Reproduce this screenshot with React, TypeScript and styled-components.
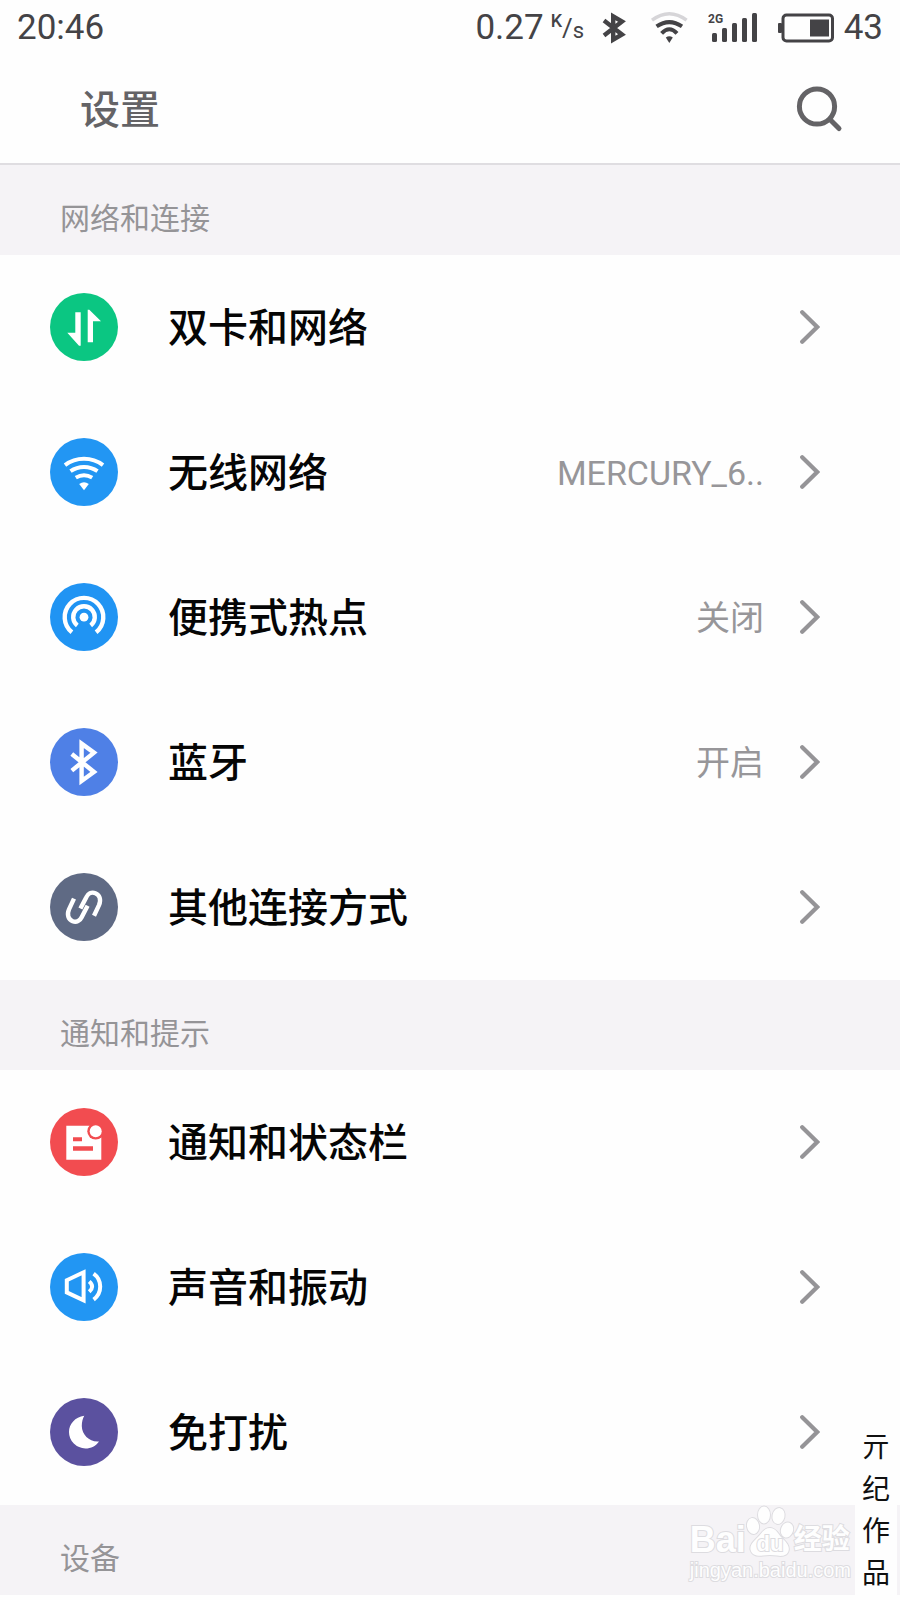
import React from "react";
import styled, { createGlobalStyle } from "styled-components";

const GlobalStyle = createGlobalStyle`
  * { box-sizing: border-box; }
  body {
    margin: 0;
    background: #fefefe;
    font-family: Roboto, "Noto Sans CJK SC", sans-serif;
  }
`;

const Page = styled.div`
  position: relative;
  padding-bottom: 5px;
  overflow: hidden;
`;

const StatusBar = styled.div`
  display: flex;
  align-items: center;
  justify-content: space-between;
  height: 55px;
  padding: 0 17px;
  color: #444346;
  font-size: 35px;
  line-height: 42px;
`;

const StatusGroup = styled.div<{ $gap: number }>`
  display: flex;
  align-items: center;
  gap: ${(p) => p.$gap}px;
`;

const Unit = styled.span`
  display: flex;
  align-items: flex-end;
  width: 31px;
  height: 32px;
  font-size: 22px;
  line-height: 26px;
`;

const UnitTop = styled.span`
  align-self: flex-start;
  font-size: 18px;
  font-weight: 500;
  line-height: 18px;
`;

const UnitSlash = styled.span`
  font-size: 26px;
  line-height: 32px;
`;

const Header = styled.header`
  display: flex;
  align-items: center;
  justify-content: space-between;
  height: 110px;
  padding: 0 56px 0 80px;
  border-bottom: 2px solid #dfdde1;
`;

const Title = styled.h1`
  margin: 0;
  padding-top: 4px;
  color: #646366;
  font-size: 40px;
  font-weight: 500;
  line-height: 60px;
`;

const SearchButton = styled.button`
  display: flex;
  padding: 0;
  border: 0;
  background: none;
  color: #646366;
`;

const SectionTitle = styled.h2`
  height: 90px;
  margin: 0;
  padding: 31px 60px 0;
  background: #f5f3f6;
  color: #959497;
  font-size: 30px;
  font-weight: 400;
  line-height: 45px;
`;

const List = styled.ul`
  margin: 0;
  padding: 0;
  list-style: none;
`;

const Row = styled.button`
  display: flex;
  align-items: center;
  width: 100%;
  height: 145px;
  padding: 0 80px 2px 50px;
  border: 0;
  background: none;
  color: #050505;
  font-family: inherit;
  text-align: left;
`;

const Label = styled.span`
  flex: 1;
  margin-left: 50px;
  padding-top: 4px;
  font-size: 40px;
  font-weight: 500;
  line-height: 60px;
`;

const Value = styled.span`
  margin-right: 36px;
  padding-top: 2px;
  color: #979699;
  font-size: 34px;
  line-height: 50px;
`;

const Signature = styled.div`
  position: absolute;
  right: 3px;
  bottom: 0;
  width: 42px;
  height: 173px;
  background: #fefefe;
  color: #101010;
  font-size: 28px;
  font-weight: 400;
  line-height: 42px;
  text-align: center;
`;

const Watermark = styled.div`
  position: absolute;
  right: 49px;
  bottom: 17px;
  color: #fefefe;
  -webkit-text-stroke: 2px #dddce0;
  paint-order: stroke fill;
  font-family: "Liberation Sans", "Noto Sans CJK SC", sans-serif;
  font-size: 20px;
  line-height: 26px;
`;

const WatermarkBrand = styled.div`
  display: flex;
  align-items: flex-end;
  height: 50px;
  font-size: 36px;
  font-weight: 700;
  line-height: 34px;
`;

const WatermarkSuffix = styled.span`
  font-size: 28px;
`;

const RoundIcon = ({ color, children }: { color: string; children: React.ReactNode }) => (
  <svg width="68" height="68" viewBox="0 0 68 68" fill="none" stroke="none" aria-hidden="true">
    <circle cx="34" cy="34" r="34" fill={color} />
    {children}
  </svg>
);

const Chevron = () => (
  <svg width="20" height="36" viewBox="0 0 20 36" fill="none" aria-hidden="true">
    <path d="M2.2 3.2L17.2 18L2.2 32.8" stroke="#959497" strokeWidth="4.2" strokeLinecap="round" />
  </svg>
);

const icons = {
  sim: (
    <RoundIcon color="#0bc682">
      <path fill="#fff" d="M25.3 19.3H30.7V52.7H29L17.3 39.7H25.3Z" />
      <path fill="#fff" d="M37.7 49.3V16.7H39.3L51 28.3H43V49.3Z" />
    </RoundIcon>
  ),
  wifi: (
    <RoundIcon color="#2296f3">
      <g stroke="#fff" strokeWidth="4">
        <path d="M15 27.2A31.5 31.5 0 0 1 53 27.2" />
        <path d="M20.5 33.2A24 24 0 0 1 47.5 33.2" />
        <path d="M25.8 39.6A16 16 0 0 1 42.2 39.6" />
      </g>
      <path fill="#fff" d="M29.2 46Q34 42.4 38.8 46L34 52.3Z" />
    </RoundIcon>
  ),
  hotspot: (
    <RoundIcon color="#2094f3">
      <g stroke="#fff" strokeWidth="4.4">
        <path d="M21.9 49.2A19.3 19.3 0 1 1 46.1 49.2" />
        <path d="M27.3 42.5A10.8 10.8 0 1 1 40.7 42.5" />
      </g>
      <circle cx="34" cy="34.2" r="4.4" fill="#fff" />
    </RoundIcon>
  ),
  bluetooth: (
    <RoundIcon color="#4f80e6">
      <path d="M21.8 26L44 44L31.6 53V15.6L44 24.6L21.8 42.6" stroke="#fff" strokeWidth="4.4" />
    </RoundIcon>
  ),
  link: (
    <RoundIcon color="#5f6a84">
      <g stroke="#fff" strokeWidth="4.4">
        <path d="M24 25.6L19 36.3C16.5 42 18.6 46.6 22.6 48.2C26.6 49.7 30 47.8 31.8 44L37.6 32.8" />
        <path d="M44 42.8L49 32.1C51.5 26.4 49.4 21.8 45.4 20.2C41.4 18.7 38 20.6 36.2 24.4L30.4 35.6" />
      </g>
    </RoundIcon>
  ),
  notice: (
    <RoundIcon color="#f24c50">
      <path fill="#fff" d="M16.3 17.7H51.3V51.7H16.3Z" />
      <circle cx="45.7" cy="23.2" r="8.4" fill="#f24c50" />
      <circle cx="45.7" cy="23.2" r="6" fill="#fff" />
      <path fill="#f24c50" d="M23 29.3H32V33.3H23ZM23 38.3H43V42.7H23Z" />
    </RoundIcon>
  ),
  sound: (
    <RoundIcon color="#2296f3">
      <g stroke="#fff" strokeWidth="4">
        <path d="M16.8 27.2L33.6 19.3V47.4L16.8 39.4Z" />
        <path d="M39.2 28.6Q45 33.6 39.2 38.8" />
        <path d="M43.6 20.6C52.4 27 52.4 40 43.6 46.6" />
      </g>
    </RoundIcon>
  ),
  moon: (
    <RoundIcon color="#5b519f">
      <path
        fill="#fff"
        d="M34.3 17.7C25 19 19 26 19 34A16.4 16.4 0 0 0 35.4 50.4C41 50.4 46 48 49 43.4C40 44.4 31.8 37 31.8 28C31.8 24 32.6 20.6 34.3 17.7Z"
      />
    </RoundIcon>
  ),
};

type Item = { icon: keyof typeof icons; label: string; value?: string };

const sections: { title: string; items: Item[] }[] = [
  {
    title: "网络和连接",
    items: [
      { icon: "sim", label: "双卡和网络" },
      { icon: "wifi", label: "无线网络", value: "MERCURY_6.." },
      { icon: "hotspot", label: "便携式热点", value: "关闭" },
      { icon: "bluetooth", label: "蓝牙", value: "开启" },
      { icon: "link", label: "其他连接方式" },
    ],
  },
  {
    title: "通知和提示",
    items: [
      { icon: "notice", label: "通知和状态栏" },
      { icon: "sound", label: "声音和振动" },
      { icon: "moon", label: "免打扰" },
    ],
  },
  { title: "设备", items: [] },
];

const StatusIcons = () => (
  <>
    <svg width="25" height="32" viewBox="0 0 25 32" fill="none" aria-hidden="true">
      <path d="M2 8.6L20 22.4L11.2 27.6V4.4L20 9.6L2 23.4" stroke="#444346" strokeWidth="4.4" />
    </svg>
    <svg width="41" height="32" viewBox="-4 0 41 32" fill="none" aria-hidden="true">
      <path d="M1 8.2Q18.3-4.6 35.6 8.2" stroke="#d6d5d8" strokeWidth="3.4" />
      <g stroke="#444346" strokeWidth="4">
        <path d="M5.6 14.4Q18.3 5.8 31 14.4" />
        <path d="M10.6 21.4Q18.3 13.2 26 21.4" />
      </g>
      <path fill="#444346" d="M14.8 25.6Q18.3 23 21.8 25.6L18.3 31Z" />
    </svg>
    <svg width="50" height="32" viewBox="0 0 50 32" fill="#444346" aria-hidden="true">
      <text x="0" y="11" fontSize="12" fontWeight="700" fontFamily="Roboto, sans-serif">2G</text>
      <rect x="4" y="21" width="5" height="9" rx="1.5" />
      <rect x="14" y="16" width="5" height="14" rx="1.5" />
      <rect x="24" y="11" width="5" height="19" rx="1.5" />
      <rect x="34" y="6" width="5" height="24" rx="1.5" />
      <rect x="44" y="1" width="5" height="29" rx="1.5" />
    </svg>
    <StatusGroup $gap={10}>
      <svg width="56" height="30" viewBox="0 0 56 30" fill="#444346" aria-hidden="true">
        <rect x="0" y="10" width="4" height="10" rx="1" />
        <rect x="5" y="2" width="49.5" height="26" rx="3.5" fill="none" stroke="#444346" strokeWidth="3" />
        <rect x="32" y="6.5" width="19" height="17" />
      </svg>
      <span>43</span>
    </StatusGroup>
  </>
);

const PawLogo = () => (
  <svg width="48" height="52" viewBox="0 0 48 52" fill="#fefefe" stroke="#dddce0" strokeWidth="2" aria-hidden="true">
    <ellipse cx="7" cy="21" rx="6" ry="8" transform="rotate(-10 7 21)" />
    <ellipse cx="18" cy="10" rx="6" ry="8.4" />
    <ellipse cx="32.5" cy="11" rx="6" ry="8" transform="rotate(12 32.5 11)" />
    <ellipse cx="41" cy="25" rx="6" ry="7.6" transform="rotate(18 41 25)" />
    <path d="M24 23C30 23 32 29 36 33C40 37 44 41 42.5 46C41 51 36 51.4 31 50.6C26 49.8 22 49.8 17 50.6C11 51.4 6 50 4.6 45C3.4 40 8 36 12 32C16 28 18 23 24 23Z" />
    <text x="24" y="46" textAnchor="middle" fontSize="22" fontWeight="700" fontFamily="Liberation Sans, sans-serif">du</text>
  </svg>
);

export default function App() {
  return (
    <>
      <GlobalStyle />
      <Page>
        <StatusBar>
          <span>20:46</span>
          <StatusGroup $gap={20}>
            <StatusGroup $gap={7}>
              <span>0.27</span>
              <Unit>
                <UnitTop>K</UnitTop>
                <UnitSlash>/</UnitSlash>
                <span>s</span>
              </Unit>
            </StatusGroup>
            <StatusIcons />
          </StatusGroup>
        </StatusBar>
        <Header>
          <Title>设置</Title>
          <SearchButton type="button" aria-label="搜索">
            <svg width="48" height="48" viewBox="0 0 48 48" fill="none" stroke="currentColor" strokeWidth="5" aria-hidden="true">
              <circle cx="21" cy="21.5" r="17.6" />
              <path d="M34 34.5L43 43.5" strokeLinecap="round" />
            </svg>
          </SearchButton>
        </Header>
        <main>
          {sections.map((section) => (
            <section key={section.title}>
              <SectionTitle>{section.title}</SectionTitle>
              <List>
                {section.items.map((item) => (
                  <li key={item.label}>
                    <Row type="button">
                      {icons[item.icon]}
                      <Label>{item.label}</Label>
                      {item.value && <Value>{item.value}</Value>}
                      <Chevron />
                    </Row>
                  </li>
                ))}
              </List>
            </section>
          ))}
        </main>
        <Watermark>
          <WatermarkBrand>
            <span>Bai</span>
            <PawLogo />
            <WatermarkSuffix>经验</WatermarkSuffix>
          </WatermarkBrand>
          <div>jingyan.baidu.com</div>
        </Watermark>
        <Signature>
          <div>亓</div>
          <div>纪</div>
          <div>作</div>
          <div>品</div>
        </Signature>
      </Page>
    </>
  );
}
